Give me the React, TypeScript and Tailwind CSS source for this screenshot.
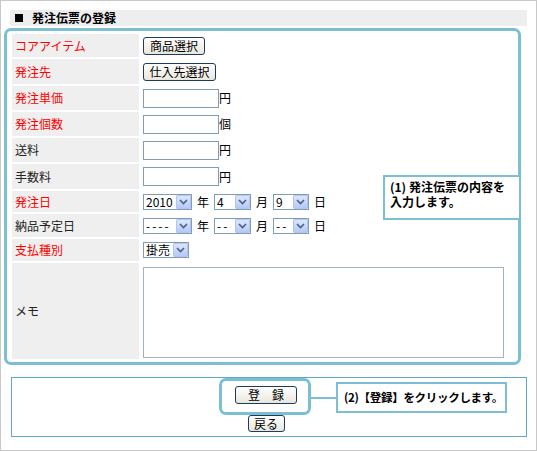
import React from "react";

const font = { fontFamily: '"Noto Sans CJK JP", "Noto Sans", sans-serif' };

const Chevron = () => (
  <svg width="9" height="6" viewBox="0 0 9 6">
    <path d="M1 1 L4.5 4.5 L8 1" stroke="#4d6185" strokeWidth="1.6" fill="none" />
  </svg>
);

const Select: React.FC<{ value: string; w: string; dash?: boolean }> = ({ value, w, dash }) => (
  <div className={`${w} h-[16px] border border-[#7f9db9] bg-white flex items-center justify-between`}>
    <span className={`pl-[2px] text-[12px] leading-none text-black ${dash ? "tracking-[2px]" : ""}`}>{value}</span>
    <div className="w-[15px] h-[14px] bg-gradient-to-b from-[#dbe5fd] to-[#b6c9f6] border border-[#b4c6ef] rounded-[1px] flex items-center justify-center">
      <Chevron />
    </div>
  </div>
);

const Btn: React.FC<{ label: string; w: string; h?: string }> = ({ label, w, h = "h-[18px]" }) => (
  <button className={`${w} ${h} border border-[#1e3a5f] rounded-[3px] bg-gradient-to-b from-white to-[#e8e6dc] text-[12px] leading-none text-black flex items-center justify-center`}>
    {label}
  </button>
);

const Input = () => <div className="w-[76px] h-[19px] border border-[#7f9db9] bg-white" />;

const Unit: React.FC<{ c: string }> = ({ c }) => <span className="text-[12px] leading-none text-black">{c}</span>;

type Row = { label: string; req: boolean; h: string; body: React.ReactNode };

const rows: Row[] = [
  { label: "コアアイテム", req: true, h: "h-[23px]", body: <Btn label="商品選択" w="w-[62px]" /> },
  { label: "発注先", req: true, h: "h-[25px]", body: <Btn label="仕入先選択" w="w-[73px]" /> },
  { label: "発注単価", req: true, h: "h-[24px]", body: <><Input /><Unit c="円" /></> },
  { label: "発注個数", req: true, h: "h-[24px]", body: <><Input /><Unit c="個" /></> },
  { label: "送料", req: false, h: "h-[24px]", body: <><Input /><Unit c="円" /></> },
  { label: "手数料", req: false, h: "h-[25px]", body: <><Input /><Unit c="円" /></> },
  {
    label: "発注日", req: true, h: "h-[21px]",
    body: (
      <div className="flex items-center gap-[5px]">
        <Select value="2010" w="w-[49px]" /><Unit c="年" />
        <Select value="4" w="w-[37px]" /><Unit c="月" />
        <Select value="9" w="w-[36px]" /><Unit c="日" />
      </div>
    ),
  },
  {
    label: "納品予定日", req: false, h: "h-[23px]",
    body: (
      <div className="flex items-center gap-[5px]">
        <Select value="----" w="w-[49px]" dash /><Unit c="年" />
        <Select value="--" w="w-[37px]" dash /><Unit c="月" />
        <Select value="--" w="w-[36px]" dash /><Unit c="日" />
      </div>
    ),
  },
  { label: "支払種別", req: true, h: "h-[22px]", body: <Select value="掛売" w="w-[46px]" /> },
  { label: "メモ", req: false, h: "h-[96px]", body: <div className="w-[361px] h-[91px] border border-[#9fb3c8] bg-white mt-[2px]" /> },
];

export default function App() {
  return (
    <div style={font} className="relative w-[537px] h-[451px] border border-[#c8c8c8] bg-white overflow-hidden">
      {/* Title */}
      <div className="ml-[9px] mt-[9px] w-[517px] h-[16px] bg-[#eeeeee] flex items-center pl-[5px] gap-[9px]">
        <div className="w-[8px] h-[8px] bg-black" />
        <span className="text-[12px] font-bold leading-none text-black">発注伝票の登録</span>
      </div>

      {/* Form frame */}
      <div className="ml-[3px] mt-[2px] w-[517px] h-[337px] border-[3px] border-[#7cbfd2] rounded-[7px] pl-[5px] pr-[5px] pt-[3px]">
        <div className="flex flex-col gap-[2px]">
          {rows.map((r) => (
            <div key={r.label} className={`flex ${r.h}`}>
              <div className={`w-[127px] shrink-0 bg-[#efefef] pl-[3px] flex items-center text-[12px] leading-none ${r.req ? "text-[#ff0000]" : "text-[#222]"}`}>
                {r.label}
              </div>
              <div className="flex-1 bg-white pl-[4px] flex items-center">{r.body}</div>
            </div>
          ))}
        </div>
      </div>

      {/* Bottom buttons */}
      <div className="ml-[10px] mt-[12px] w-[516px] h-[60px] border border-[#5aaac8] flex flex-col items-center pt-[8px] gap-[11px] pr-[6px]">
        <Btn label="登　録" w="w-[62px]" />
        <Btn label="戻る" w="w-[37px]" h="h-[17px]" />
      </div>

      {/* Callout 1 */}
      <div className="absolute left-[382px] top-[174px] w-[138px] h-[45px] border-2 border-[#7cbfd2] bg-white pl-[5px] pt-[4px] text-[12px] font-bold text-black whitespace-nowrap flex flex-col gap-[3px]">
        <span className="leading-none">(1) 発注伝票の内容を</span>
        <span className="leading-none">入力します。</span>
      </div>

      {/* Highlight around 登録 */}
      <div className="absolute left-[218px] top-[377px] w-[92px] h-[37px] border-[3px] border-[#7cbfd2] rounded-[7px]" />
      <div className="absolute left-[310px] top-[396px] w-[25px] h-[2px] bg-[#7cbfd2]" />

      {/* Callout 2 */}
      <div className="absolute left-[335px] top-[381px] w-[171px] h-[31px] border-2 border-[#7cbfd2] bg-white pl-[6px] flex items-center text-[11.5px] font-bold leading-none text-black whitespace-nowrap tracking-[-0.3px]">
        (2)【登録】をクリックします。
      </div>
    </div>
  );
}
